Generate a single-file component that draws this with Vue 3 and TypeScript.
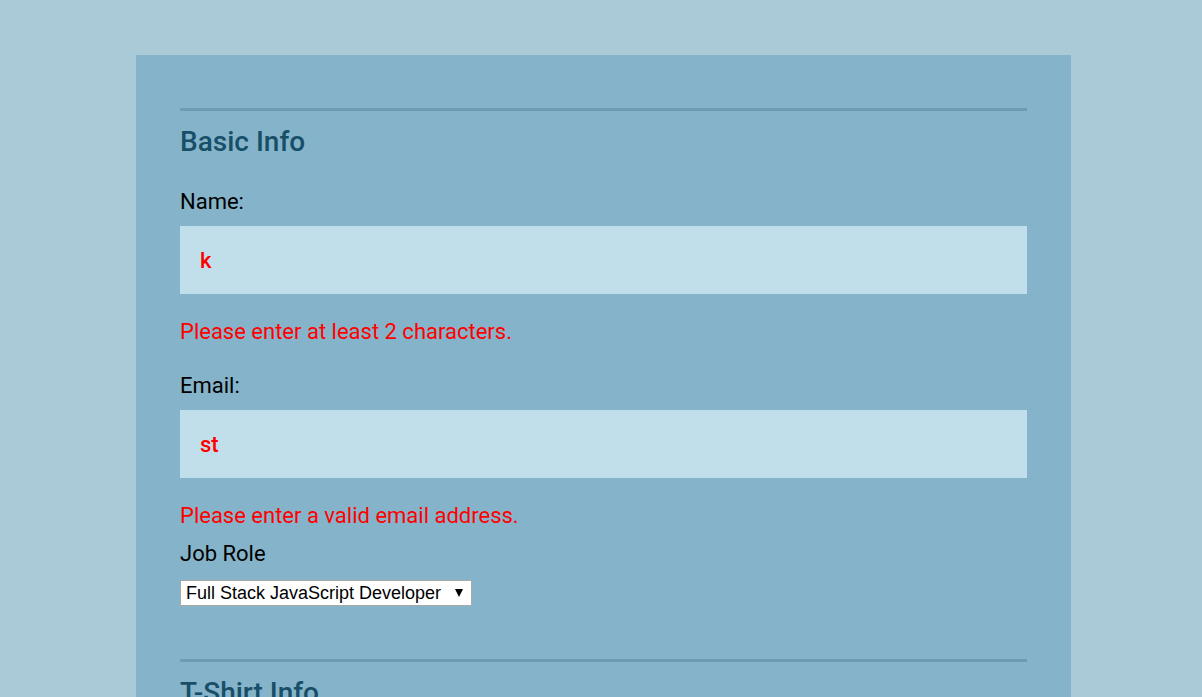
<script setup lang="ts">
import { ref } from 'vue'

const name = ref('k')
const email = ref('st')
const role = ref('full-stack')
const roles = [
  { value: 'full-stack', label: 'Full Stack JavaScript Developer' },
]
</script>

<template>
  <main class="page">
    <form class="card" novalidate @submit.prevent>
      <fieldset class="group">
        <legend class="title">Basic Info</legend>
        <label class="label" for="name">Name:</label>
        <input id="name" v-model="name" class="field" type="text" aria-describedby="name-error" />
        <p id="name-error" class="error">Please enter at least 2 characters.</p>

        <label class="label email" for="mail">Email:</label>
        <input id="mail" v-model="email" class="field" type="email" aria-describedby="mail-error" />
        <p id="mail-error" class="error">Please enter a valid email address.</p>

        <label class="label" for="role">Job Role</label>
        <div class="select-wrap">
          <select id="role" v-model="role" class="select">
            <option v-for="r in roles" :key="r.value" :value="r.value">{{ r.label }}</option>
          </select>
          <svg class="arrow" width="8" height="8" viewBox="0 0 8 8" aria-hidden="true">
            <path d="M0 0h8L4 8z" fill="#000" />
          </svg>
        </div>
      </fieldset>
      <fieldset class="group">
        <legend class="title">T-Shirt Info</legend>
      </fieldset>
    </form>
  </main>
</template>

<style>
html {
  background: #abcad7;
  scrollbar-width: none;
}
</style>

<style scoped>
.page {
  padding: 55px 131px 0 136px;
  color: #000;
  font: 400 22px/28px Roboto, sans-serif;
}

.card {
  padding: 53px 44px 0;
  background: #85b4ca;
}

.group {
  min-width: 0;
  margin: 0;
  padding: 0 0 53px;
  border: 0;
}

.title {
  box-sizing: border-box;
  width: 100%;
  margin-bottom: 28px;
  padding: 13px 0 0;
  border-top: 3px solid #6c9bb3;
  color: #184f68;
  font-size: 28px;
  font-weight: 500;
  line-height: 36px;
}

.label {
  display: block;
  margin-bottom: 10px;
}

.email {
  margin-top: 26px;
}

.field {
  box-sizing: border-box;
  display: block;
  width: 100%;
  height: 68px;
  padding: 0 20px;
  border: 0;
  border-radius: 0;
  outline: 0;
  background: #c1dfea;
  color: #f00;
  font: 500 22px/28px Roboto, sans-serif;
}

.error {
  margin: 24px 0 10px;
  color: #f00;
}

.select-wrap {
  position: relative;
  width: 292px;
  margin-top: 12px;
}

.select {
  box-sizing: border-box;
  display: block;
  width: 100%;
  height: 26px;
  padding: 0 5px;
  border: 1px solid #a9a9a9;
  border-radius: 0;
  appearance: none;
  background: #fff;
  color: #000;
  font: 400 18px/24px "Liberation Sans", Arial, sans-serif;
}

.arrow {
  position: absolute;
  top: 9px;
  right: 9px;
  pointer-events: none;
}
</style>
